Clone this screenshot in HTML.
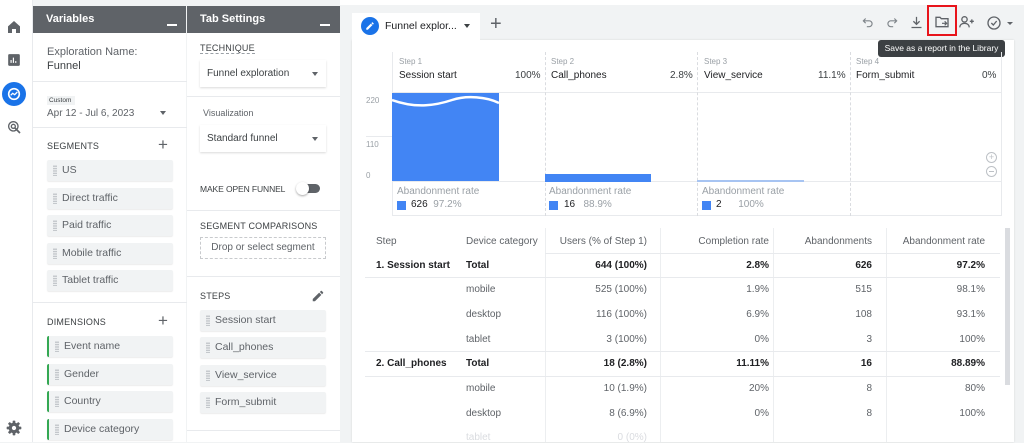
<!DOCTYPE html>
<html><head><meta charset="utf-8"><style>
*{box-sizing:border-box;margin:0;padding:0}
body{width:1024px;height:442px;overflow:hidden;background:#f1f3f4;font-family:"Liberation Sans",sans-serif;color:#3c4043;position:relative}
.a{position:absolute}
.t{position:absolute;white-space:nowrap}
.hdr{background:#5f6368;color:#fff;font-weight:bold;font-size:11px}
.chip{position:absolute;background:#f1f3f4;border-radius:2px;height:21px;font-size:10.5px;color:#5f6368;line-height:21px;padding-left:15px;box-shadow:0 1px 1px rgba(0,0,0,.08)}
.chip:before{content:"";position:absolute;left:6px;top:5px;width:4px;height:11px;background-image:radial-gradient(circle,#bdc1c6 0.8px,transparent 1px);background-size:2px 2.4px}
.g{border-left:2px solid #34a853}
.lab{font-size:9px;color:#3c4043;letter-spacing:.2px}
.dd{position:absolute;background:#fff;height:27px;font-size:10px;color:#3c4043;line-height:27px;padding-left:7px;box-shadow:0 1px 2px rgba(0,0,0,.15)}
.dd:after{content:"";position:absolute;right:8px;top:12px;border:3.5px solid transparent;border-top:4px solid #5f6368}
.hr{position:absolute;height:1px;background:#e8eaed}
.td{position:absolute;font-size:10px;color:#5f6368;white-space:nowrap}
.r{text-align:right}
.b{font-weight:bold;color:#202124}
</style></head><body>
<!-- left rail -->
<div class="a" style="left:0;top:0;width:33px;height:442px;background:#fff;border-right:1px solid #e8eaed"></div>
<svg class="a" style="left:6px;top:19px" width="16" height="16" viewBox="0 0 24 24"><path d="M12 3L3 11v10h6v-6h6v6h6V11z" fill="#5f6368"/></svg>
<svg class="a" style="left:7px;top:53px" width="14" height="14" viewBox="0 0 24 24"><rect x="2" y="2" width="20" height="20" rx="2" fill="#5f6368"/><path d="M7 17v-5M11 17V8M15 17v-3" stroke="#fff" stroke-width="2"/></svg>
<div class="a" style="left:2px;top:82px;width:24px;height:24px;border-radius:50%;background:#1a73e8"></div>
<svg class="a" style="left:6px;top:86px" width="16" height="16" viewBox="0 0 24 24"><circle cx="12" cy="12" r="8" fill="none" stroke="#fff" stroke-width="2.4"/><path d="M7 14l3-3 3 2 4-4" fill="none" stroke="#fff" stroke-width="2"/></svg>
<svg class="a" style="left:6px;top:119px" width="16" height="16" viewBox="0 0 24 24"><circle cx="11" cy="11" r="7" fill="none" stroke="#5f6368" stroke-width="2"/><circle cx="11" cy="11" r="3" fill="none" stroke="#5f6368" stroke-width="2"/><path d="M13 13l8 8" stroke="#5f6368" stroke-width="2.5"/></svg>
<svg class="a" style="left:6px;top:420px" width="16" height="16" viewBox="0 0 24 24"><g fill="#5f6368"><rect x="10" y="1" width="4" height="22" rx="1"/><rect x="10" y="1" width="4" height="22" rx="1" transform="rotate(45 12 12)"/><rect x="10" y="1" width="4" height="22" rx="1" transform="rotate(90 12 12)"/><rect x="10" y="1" width="4" height="22" rx="1" transform="rotate(135 12 12)"/><circle cx="12" cy="12" r="8"/></g><circle cx="12" cy="12" r="3.2" fill="#fff"/></svg>

<!-- Variables panel -->
<div class="a" style="left:33px;top:6px;width:153px;height:436px;background:#fff"></div>
<div class="a hdr" style="left:33px;top:6px;width:153px;height:27px"><span class="t" style="left:13px;top:7px">Variables</span><span class="a" style="left:134px;top:18px;width:10px;height:2px;background:#fff"></span></div>
<div class="t" style="left:47px;top:46px;font-size:11px;color:#5f6368">Exploration Name:</div>
<div class="t" style="left:47px;top:60px;font-size:11px;color:#3c4043">Funnel</div>
<div class="a" style="left:33px;top:81px;width:154px;height:1px;background:#e8eaed"></div>
<div class="a" style="left:47px;top:96px;width:28px;height:9px;background:#f1f3f4;font-size:6.5px;line-height:9px;padding-left:2px">Custom</div>
<div class="t" style="left:47px;top:108px;font-size:10px;color:#5f6368">Apr 12 - Jul 6, 2023</div>
<div class="a" style="left:160px;top:111px;border:3.5px solid transparent;border-top:4px solid #5f6368"></div>
<div class="a" style="left:33px;top:127px;width:154px;height:1px;background:#e8eaed"></div>
<div class="t lab" style="left:47px;top:141px">SEGMENTS</div>
<div class="t" style="left:158px;top:135px;font-size:17px;color:#5f6368">+</div>
<div class="chip" style="left:47px;top:160px;width:126px">US</div>
<div class="chip" style="left:47px;top:188px;width:126px">Direct traffic</div>
<div class="chip" style="left:47px;top:215px;width:126px">Paid traffic</div>
<div class="chip" style="left:47px;top:243px;width:126px">Mobile traffic</div>
<div class="chip" style="left:47px;top:270px;width:126px">Tablet traffic</div>
<div class="a" style="left:33px;top:302px;width:154px;height:1px;background:#e8eaed"></div>
<div class="t lab" style="left:47px;top:317px">DIMENSIONS</div>
<div class="t" style="left:158px;top:311px;font-size:17px;color:#5f6368">+</div>
<div class="chip g" style="left:47px;top:336px;width:126px">Event name</div>
<div class="chip g" style="left:47px;top:364px;width:126px">Gender</div>
<div class="chip g" style="left:47px;top:391px;width:126px">Country</div>
<div class="chip g" style="left:47px;top:419px;width:126px">Device category</div>

<!-- Tab settings -->
<div class="a" style="left:187px;top:6px;width:153px;height:436px;background:#fff"></div>
<div class="a hdr" style="left:187px;top:6px;width:153px;height:27px"><span class="t" style="left:13px;top:7px">Tab Settings</span><span class="a" style="left:133px;top:18px;width:10px;height:2px;background:#fff"></span></div>
<div class="t lab" style="left:200px;top:43px;border-bottom:1px dashed #9aa0a6">TECHNIQUE</div>
<div class="dd" style="left:200px;top:60px;width:126px">Funnel exploration</div>
<div class="a" style="left:187px;top:96px;width:153px;height:1px;background:#e8eaed"></div>
<div class="t" style="left:203px;top:108px;font-size:9px;color:#5f6368">Visualization</div>
<div class="dd" style="left:200px;top:125px;width:126px">Standard funnel</div>
<div class="t" style="left:200px;top:184px;font-size:8.5px;letter-spacing:-0.1px">MAKE OPEN FUNNEL</div>
<div class="a" style="left:300px;top:184px;width:20px;height:9px;border-radius:5px;background:#5f6368"></div>
<div class="a" style="left:296px;top:182px;width:13px;height:13px;border-radius:50%;background:#fff;box-shadow:0 1px 2px rgba(0,0,0,.35)"></div>
<div class="a" style="left:187px;top:210px;width:153px;height:1px;background:#e8eaed"></div>
<div class="t lab" style="left:200px;top:221px">SEGMENT COMPARISONS</div>
<div class="a" style="left:200px;top:237px;width:126px;height:22px;border:1px dashed #c8cacd;font-size:10px;color:#5f6368;text-align:center;line-height:20px">Drop or select segment</div>
<div class="a" style="left:187px;top:276px;width:153px;height:1px;background:#e8eaed"></div>
<div class="t lab" style="left:200px;top:291px">STEPS</div>
<svg class="a" style="left:311px;top:289px" width="14" height="14" viewBox="0 0 24 24"><path d="M3 17.2V21h3.8L17.8 10l-3.8-3.8zM20.7 7a1 1 0 000-1.4l-2.3-2.3a1 1 0 00-1.4 0l-1.8 1.8 3.8 3.8z" fill="#5f6368"/></svg>
<div class="chip" style="left:200px;top:310px;width:126px">Session start</div>
<div class="chip" style="left:200px;top:337px;width:126px">Call_phones</div>
<div class="chip" style="left:200px;top:365px;width:126px">View_service</div>
<div class="chip" style="left:200px;top:392px;width:126px">Form_submit</div>
<div class="a" style="left:187px;top:430px;width:153px;height:1px;background:#e8eaed"></div>

<!-- main area -->
<div class="a" style="left:340px;top:0;width:684px;height:5px;background:#fff"></div>
<div class="a" style="left:352px;top:40px;width:662px;height:402px;background:#fff;box-shadow:0 0 2px rgba(0,0,0,.12)"></div>
<div class="a" style="left:352px;top:13px;width:128px;height:28px;background:#fff"></div>
<div class="a" style="left:361px;top:17px;width:18px;height:18px;border-radius:50%;background:#1a73e8"></div>
<svg class="a" style="left:365px;top:21px" width="10" height="10" viewBox="0 0 24 24"><path d="M3 17.2V21h3.8L17.8 10l-3.8-3.8zM20.7 7a1 1 0 000-1.4l-2.3-2.3a1 1 0 00-1.4 0l-1.8 1.8 3.8 3.8z" fill="#fff"/></svg>
<div class="t" style="left:385px;top:20px;font-size:10.5px;color:#202124">Funnel explor...</div>
<div class="a" style="left:464px;top:24px;border:3.5px solid transparent;border-top:4px solid #3c4043"></div>
<div class="t" style="left:490px;top:13px;font-size:20px;color:#5f6368;font-weight:300">+</div>

<!-- toolbar -->
<svg class="a" style="left:861px;top:15px" width="14" height="14" viewBox="0 0 24 24"><path d="M8 6L4 10l4 4M4 10h10a5 5 0 010 10h-4" fill="none" stroke="#80868b" stroke-width="2"/></svg>
<svg class="a" style="left:885px;top:15px" width="14" height="14" viewBox="0 0 24 24"><path d="M16 6l4 4-4 4M20 10H10a5 5 0 000 10h4" fill="none" stroke="#80868b" stroke-width="2"/></svg>
<svg class="a" style="left:909px;top:15px" width="15" height="15" viewBox="0 0 24 24"><path d="M12 3v12M7 10l5 5 5-5M4 20h16" fill="none" stroke="#5f6368" stroke-width="2"/></svg>
<svg class="a" style="left:934px;top:14px" width="16" height="16" viewBox="0 0 24 24"><path d="M3 5h6l2 2h10v12H3z" fill="none" stroke="#5f6368" stroke-width="2"/><path d="M12 14h7M16 11l3 3-3 3" fill="none" stroke="#5f6368" stroke-width="1.8"/></svg>
<div class="a" style="left:927px;top:5px;width:30px;height:31px;border:2.5px solid #e8141b"></div>
<svg class="a" style="left:958px;top:14px" width="17" height="16" viewBox="0 0 24 24"><circle cx="9" cy="8" r="4" fill="none" stroke="#5f6368" stroke-width="2"/><path d="M2 20c0-4 3-6 7-6s7 2 7 6" fill="none" stroke="#5f6368" stroke-width="2"/><path d="M20 8v6M17 11h6" stroke="#5f6368" stroke-width="2"/></svg>
<div class="a" style="left:980px;top:12px;width:38px;height:22px;border-radius:11px;background:#f1f3f4"></div>
<svg class="a" style="left:986px;top:15px" width="16" height="16" viewBox="0 0 24 24"><circle cx="12" cy="12" r="9" fill="none" stroke="#5f6368" stroke-width="2"/><path d="M8 12l3 3 5-6" fill="none" stroke="#5f6368" stroke-width="2"/></svg>
<div class="a" style="left:1007px;top:22px;border:3px solid transparent;border-top:3.5px solid #5f6368"></div>
<div class="a" style="left:878px;top:40px;width:127px;height:17px;background:#3c4043;border-radius:3px;color:#fff;font-size:8.5px;line-height:17px;text-align:center">Save as a report in the Library</div>

<!-- chart -->
<div class="a" style="left:392px;top:52px;width:610px;height:164px;border:1px solid #e8eaed;border-top:none"></div>
<div class="hr" style="left:392px;top:92px;width:610px"></div>
<div class="hr" style="left:392px;top:181px;width:610px"></div>
<div class="a" style="left:545px;top:52px;width:0;height:164px;border-left:1px dashed #dadce0"></div>
<div class="a" style="left:697px;top:52px;width:0;height:164px;border-left:1px dashed #dadce0"></div>
<div class="a" style="left:850px;top:52px;width:0;height:164px;border-left:1px dashed #dadce0"></div>
<div class="t" style="left:399px;top:57px;font-size:8px;color:#9aa0a6">Step 1</div>
<div class="t" style="left:399px;top:70px;font-size:10px;color:#202124">Session start</div>
<div class="t" style="left:515px;top:70px;font-size:10px;color:#3c4043">100%</div>
<div class="t" style="left:551px;top:57px;font-size:8px;color:#9aa0a6">Step 2</div>
<div class="t" style="left:551px;top:70px;font-size:10px;color:#202124">Call_phones</div>
<div class="t" style="left:670px;top:70px;font-size:10px">2.8%</div>
<div class="t" style="left:704px;top:57px;font-size:8px;color:#9aa0a6">Step 3</div>
<div class="t" style="left:704px;top:70px;font-size:10px;color:#202124">View_service</div>
<div class="t" style="left:818px;top:70px;font-size:10px">11.1%</div>
<div class="t" style="left:856px;top:57px;font-size:8px;color:#9aa0a6">Step 4</div>
<div class="t" style="left:856px;top:70px;font-size:10px;color:#202124">Form_submit</div>
<div class="t" style="left:982px;top:70px;font-size:10px">0%</div>
<div class="t" style="left:366px;top:96px;font-size:8px;color:#9aa0a6">220</div>
<div class="t" style="left:366px;top:140px;font-size:8px;color:#9aa0a6">110</div>
<div class="t" style="left:366px;top:171px;font-size:8px;color:#9aa0a6">0</div>
<div class="hr" style="left:366px;top:136px;width:26px"></div>
<svg class="a" style="left:392px;top:93px" width="108" height="89"><path d="M0 0H107V88H0z" fill="#4285f4"/><path d="M0 7 C25 16,45 12,60 7 S95 4,107 10" stroke="#fff" stroke-width="2.5" fill="none"/></svg>
<div class="a" style="left:545px;top:174px;width:106px;height:8px;background:#4285f4"></div>
<div class="a" style="left:697px;top:180px;width:107px;height:2px;background:#a7c4f2"></div>
<div class="t" style="left:397px;top:186px;font-size:10px;color:#9aa0a6">Abandonment rate</div>
<div class="a" style="left:397px;top:201px;width:9px;height:9px;background:#4285f4"></div>
<div class="t" style="left:411px;top:199px;font-size:10px;color:#202124">626 <span style="color:#9aa0a6">&nbsp;97.2%</span></div>
<div class="t" style="left:549px;top:186px;font-size:10px;color:#9aa0a6">Abandonment rate</div>
<div class="a" style="left:549px;top:201px;width:9px;height:9px;background:#4285f4"></div>
<div class="t" style="left:564px;top:199px;font-size:10px;color:#202124">16 <span style="color:#9aa0a6">&nbsp;&nbsp;88.9%</span></div>
<div class="t" style="left:702px;top:186px;font-size:10px;color:#9aa0a6">Abandonment rate</div>
<div class="a" style="left:702px;top:201px;width:9px;height:9px;background:#4285f4"></div>
<div class="t" style="left:716px;top:199px;font-size:10px;color:#202124">2 <span style="color:#9aa0a6">&nbsp;&nbsp;&nbsp;&nbsp;&nbsp;100%</span></div>
<div class="a" style="left:986px;top:152px;width:11px;height:11px;border:1px solid #bdc1c6;border-radius:50%;font-size:9px;line-height:9px;text-align:center;color:#bdc1c6">+</div>
<div class="a" style="left:986px;top:166px;width:11px;height:11px;border:1px solid #bdc1c6;border-radius:50%"><div class="a" style="left:2px;top:4px;width:5px;height:1px;background:#bdc1c6"></div></div>

<!-- table -->
<div class="a" style="left:1005px;top:228px;width:5px;height:157px;background:#dadce0"></div>
<div class="a" style="left:545px;top:228px;width:1px;height:214px;background:#eceef0"></div>
<div class="a" style="left:660px;top:228px;width:1px;height:214px;background:#eceef0"></div>
<div class="a" style="left:773px;top:228px;width:1px;height:214px;background:#eceef0"></div>
<div class="a" style="left:886px;top:228px;width:1px;height:214px;background:#eceef0"></div>
<div class="hr" style="left:545px;top:253px;width:455px"></div>
<div class="hr" style="left:365px;top:277px;width:635px"></div>
<div class="hr" style="left:365px;top:351px;width:635px"></div>
<div class="hr" style="left:365px;top:376px;width:635px"></div>

<div class="td" style="left:376px;top:236px">Step</div>
<div class="td" style="left:466px;top:236px">Device category</div>
<div class="td r" style="left:546px;top:236px;width:101px">Users (% of Step 1)</div>
<div class="td r" style="left:661px;top:236px;width:108px">Completion rate</div>
<div class="td r" style="left:774px;top:236px;width:98px">Abandonments</div>
<div class="td r" style="left:887px;top:236px;width:98px">Abandonment rate</div>

<div class="td b" style="left:376px;top:260px">1. Session start</div>
<div class="td b" style="left:466px;top:260px">Total</div>
<div class="td r b" style="left:546px;top:260px;width:101px">644 (100%)</div>
<div class="td r b" style="left:661px;top:260px;width:108px">2.8%</div>
<div class="td r b" style="left:774px;top:260px;width:98px">626</div>
<div class="td r b" style="left:887px;top:260px;width:98px">97.2%</div>

<div class="td" style="left:466px;top:284px">mobile</div>
<div class="td r" style="left:546px;top:284px;width:101px">525 (100%)</div>
<div class="td r" style="left:661px;top:284px;width:108px">1.9%</div>
<div class="td r" style="left:774px;top:284px;width:98px">515</div>
<div class="td r" style="left:887px;top:284px;width:98px">98.1%</div>

<div class="td" style="left:466px;top:309px">desktop</div>
<div class="td r" style="left:546px;top:309px;width:101px">116 (100%)</div>
<div class="td r" style="left:661px;top:309px;width:108px">6.9%</div>
<div class="td r" style="left:774px;top:309px;width:98px">108</div>
<div class="td r" style="left:887px;top:309px;width:98px">93.1%</div>

<div class="td" style="left:466px;top:334px">tablet</div>
<div class="td r" style="left:546px;top:334px;width:101px">3 (100%)</div>
<div class="td r" style="left:661px;top:334px;width:108px">0%</div>
<div class="td r" style="left:774px;top:334px;width:98px">3</div>
<div class="td r" style="left:887px;top:334px;width:98px">100%</div>

<div class="td b" style="left:376px;top:358px">2. Call_phones</div>
<div class="td b" style="left:466px;top:358px">Total</div>
<div class="td r b" style="left:546px;top:358px;width:101px">18 (2.8%)</div>
<div class="td r b" style="left:661px;top:358px;width:108px">11.11%</div>
<div class="td r b" style="left:774px;top:358px;width:98px">16</div>
<div class="td r b" style="left:887px;top:358px;width:98px">88.89%</div>

<div class="td" style="left:466px;top:383px">mobile</div>
<div class="td r" style="left:546px;top:383px;width:101px">10 (1.9%)</div>
<div class="td r" style="left:661px;top:383px;width:108px">20%</div>
<div class="td r" style="left:774px;top:383px;width:98px">8</div>
<div class="td r" style="left:887px;top:383px;width:98px">80%</div>

<div class="td" style="left:466px;top:408px">desktop</div>
<div class="td r" style="left:546px;top:408px;width:101px">8 (6.9%)</div>
<div class="td r" style="left:661px;top:408px;width:108px">0%</div>
<div class="td r" style="left:774px;top:408px;width:98px">8</div>
<div class="td r" style="left:887px;top:408px;width:98px">100%</div>

<div class="td" style="left:466px;top:432px;color:#dadce0">tablet</div>
<div class="td r" style="left:546px;top:432px;width:101px;color:#dadce0">0 (0%)</div>
</body></html>
